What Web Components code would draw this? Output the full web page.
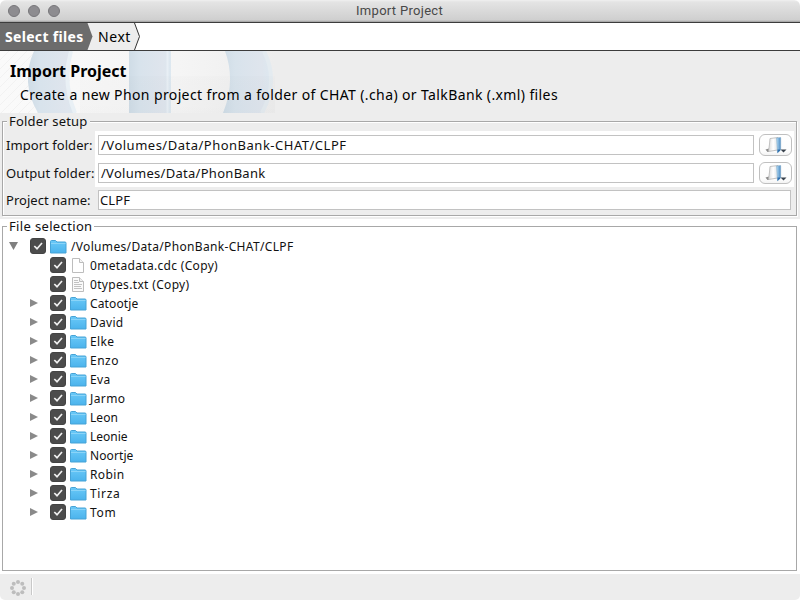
<!DOCTYPE html>
<html lang="en"><head><meta charset="utf-8"><title>Import Project</title>
<style>html,body{margin:0;width:800px;height:600px;overflow:hidden;background:#fff}</style></head><body>
<import-window></import-window>
<script>
const define=(name,html,setup)=>customElements.define(name,class extends HTMLElement{
 connectedCallback(){ if(this.shadowRoot)return; const r=this.attachShadow({mode:'open'}); const t=document.createElement('template'); t.innerHTML=html; r.append(t.content.cloneNode(true)); if(setup)setup(this,r); }
});
// Single-line label whose tracking is set so that it spans the width in "w".
define('fit-label',`<style>:host{display:block;white-space:pre;flex:none}span{display:inline-block}</style><span><slot></slot></span>`,(h,r)=>{
 const s=r.querySelector('span'),w=+h.getAttribute('w'),n=h.textContent.length;
 if(w){ const d=w-s.getBoundingClientRect().width; s.style.letterSpacing=(d/n).toFixed(3)+'px'; }
});
define('title-bar',`<style>:host{display:grid;grid-template-columns:100px 1fr 100px;align-items:center;height:22px;box-sizing:border-box;background:linear-gradient(#f0f0f0 0,#e4e4e4 2px,#cfcfcf 20px,#b8b8b8);border-bottom:1px solid #aaa;border-radius:6px 6px 0 0;color:#484848;font:13px/20px Roboto,Inter,sans-serif}
.dots{display:flex;gap:8px;padding-left:8px}.dots i{width:12px;height:12px;box-sizing:border-box;border-radius:50%;background:#8d8c90;border:1px solid #77767a}
.t{display:flex;justify-content:center;padding:1px 1px 0 0}</style><div class="dots"><i></i><i></i><i></i></div><div class="t"><fit-label w="87">Import Project</fit-label></div>`);
define('step-bar',`<style>:host{display:grid;height:29px;box-sizing:border-box;border-top:1px solid #3c3c3c;border-bottom:1px solid #3c3c3c;background:#fff}
svg{display:block}.l{display:flex;font:14px/27px "Noto Sans",sans-serif;padding-left:5px}.l b{width:93px;color:#fff;font-weight:700}.c{color:#000}svg,.l{grid-area:1/1}</style>
<svg width="150" height="27"><path d="M87 0H134.500L139.500 13.500L134.500 27H87Z" fill="#ededed"/><path d="M134.500 0L139.500 13.500L134.500 27" fill="none" stroke="#333"/><path d="M0 0H87.500L92.500 13.500L87.500 27H0Z" fill="#6c6c6c"/></svg>
<div class="l"><b><fit-label w="78.500">Select files</fit-label></b><fit-label class="c" w="33">Next</fit-label></div>`);
define('page-heading',`<style>:host{display:grid;height:62px;background:#ededed;overflow:hidden}svg,.t{grid-area:1/1}.t{padding:9px 0 0 10px;font-family:"Noto Sans",sans-serif;color:#000}.h{font-weight:700;font-size:16px;line-height:23px}.s{font-size:14px;line-height:24px;padding-left:10px}</style>
<svg width="275" height="62"><defs>
<linearGradient id="f"><stop stop-color="#fafafa"/><stop offset=".65" stop-color="#f5f5f5"/><stop offset="1" stop-color="#ededed"/></linearGradient>
<linearGradient id="b"><stop stop-color="#cfdce6"/><stop offset=".25" stop-color="#d8e3ec"/><stop offset=".8" stop-color="#dfe5ed"/><stop offset="1" stop-color="#dde8f0"/></linearGradient>
<linearGradient id="s" x2="0" y2="1"><stop stop-color="#000" stop-opacity=".01"/><stop offset="1" stop-color="#000" stop-opacity=".02"/></linearGradient>
<pattern id="p" width="9" height="9" patternUnits="userSpaceOnUse"><path d="M-1 10L10-1M-1 1L1-1M8 10L10 8" stroke="#f2f2f2" fill="none"/></pattern></defs>
<path fill="url(#f)" d="M0 0H275V62H0Z"/><path fill="url(#p)" d="M0 0H70V62H0Z"/>
<path d="M34 0H72Q63 31 76 62H38Q20 31 34 0Z" fill="url(#b)"/><path d="M71 0Q62 31 75 62" fill="none" stroke="#e9f0f5" stroke-width="4"/>
<path d="M129 0H171V62H129Z" fill="url(#b)"/><path d="M167.500 0V62" stroke="#e8eff5" stroke-width="2"/>
<path d="M225 0H264Q279 30 262 62H223Q236 30 225 0Z" fill="url(#b)"/><path d="M264 0Q279 30 262 62" fill="none" stroke="#e4ebf0" stroke-width="4"/>
<path d="M80 25H275V62H80Z" fill="url(#s)"/></svg>
<div class="t"><fit-label class="h" w="116.500">Import Project</fit-label><fit-label class="s" w="538">Create a new Phon project from a folder of CHAT (.cha) or TalkBank (.xml) files</fit-label></div>`);
define('group-box',`<style>:host{display:block;position:relative;box-sizing:border-box;border:1px solid #a8a8a8;margin:0 3px 0 2px;box-shadow:1px 1px 0 #fff,inset 1px 1px 0 #fff}
.c{position:absolute;left:4px;top:-10px;padding:0 2px;background:linear-gradient(transparent 8px,var(--bg,#fff) 8px 12px,transparent 12px);font:13px/19px "Noto Sans",sans-serif}</style><fit-label class="c"></fit-label><slot></slot>`,(h,r)=>{
 const old=r.querySelector('.c'),l=document.createElement('fit-label');l.className='c';l.setAttribute('w',h.getAttribute('w'));l.textContent=h.getAttribute('caption');old.replaceWith(l);});
define('text-box',`<style>:host{display:block;box-sizing:border-box;height:20px;border:1px solid #c2c2c2;background:#fff;padding-left:2px;font:13px/19px "Noto Sans",sans-serif;overflow:hidden}</style><slot></slot>`);
define('browse-button',`<style>:host{display:block;width:33px;height:22px;box-sizing:border-box;border:1px solid #c0c0c0;border-radius:6px;background:linear-gradient(#fff,#fdfdfd 80%,#f3f3f3)}svg{display:block}</style>
<svg width="31" height="20" viewBox="0 0 31 20"><defs><linearGradient id="a"><stop stop-color="#b5def8"/><stop offset="1" stop-color="#4a88c0"/></linearGradient><linearGradient id="w"><stop stop-color="#dcdcdc"/><stop offset=".5" stop-color="#fff"/><stop offset="1" stop-color="#dfe2e5"/></linearGradient></defs>
<path d="M5.500 14.500L9 13.500L9 17H7.500Z" fill="#8c8c8c"/><path d="M10 3.500L18 2.500L17.500 15L8.500 16.500L9.500 9Z" fill="url(#w)" stroke="#b5b5b5" stroke-width=".8"/><path d="M16.500 3L20.700 2.500V15L17.500 17.800Z" fill="url(#a)" stroke="#7fa6c4" stroke-width=".5"/><path d="M17.500 14.500H20V15.500L17.500 18Z" fill="#2f6fae"/><path d="M20.500 14.500H26.500L23.500 17.500Z" fill="#39424d"/></svg>`);
define('folder-setup',`<style>:host{display:block;padding:9px 2px 5px 3px;font:13px/19px "Noto Sans",sans-serif}.g{display:grid;grid-template-columns:89px 1fr;grid-template-rows:28px 28px 27px}.l{padding:5px 0 0 0}.f{display:flex;background:#fff;padding:4px 2px 0 3px;gap:5px}.f text-box{flex:1}.f browse-button{margin-top:-1px}.n{padding:3px 3px 0}.l.p{padding-top:4px}.n fit-label{margin-left:-1px}</style>
<div class="g"><fit-label class="l" w="86.500">Import folder:</fit-label><div class="f"><text-box><fit-label w="245.500">/Volumes/Data/PhonBank-CHAT/CLPF</fit-label></text-box><browse-button></browse-button></div>
<fit-label class="l" w="88.500">Output folder:</fit-label><div class="f"><text-box><fit-label w="164.500">/Volumes/Data/PhonBank</fit-label></text-box><browse-button></browse-button></div>
<fit-label class="l p" w="84.500">Project name:</fit-label><div class="n"><text-box><fit-label w="30">CLPF</fit-label></text-box></div></div>`);
const icons={
folder:`<path d="M.5 2.500Q.5 1.500 1.500 1.500H5.500L7 3H15Q16 3 16 4V14H.5Z" fill="url(#z)" stroke="#47a3d6"/><path d="M1 4.500H15.500" stroke="#8ad4f8"/>`,
file:`<path d="M2.500.5H9.500L13.500 4.500V14.500H2.500Z" fill="#fff" stroke="#bdbdbd"/><path d="M9.500.5V4.500H13.500" fill="#f5f5f5" stroke="#bdbdbd"/>`,
text:`<path d="M2.500.5H9.500L13.500 4.500V14.500H2.500Z" fill="#fafafa" stroke="#bdbdbd"/><path d="M9.500.5V4.500H13.500" fill="#eee" stroke="#bdbdbd"/><path d="M4 3.500H8M4 5.500H9M4 7.500H12M4 9.500H11M4 11.500H12" stroke="#c2c2c2"/>`};
define('tree-row',`<style>:host{display:flex;height:19px;align-items:center;font:12px/19px "Noto Sans",sans-serif}svg{display:block;flex:none;margin-bottom:1px}.a{margin-right:12px}.k{margin-right:4px;margin-bottom:2px}.i{margin-right:3px}fit-label{line-height:19px}:host([root]) .i{margin-right:4px}</style>
<svg class="a" width="9" height="10"></svg><svg class="k" width="16" height="16"><rect x=".5" y=".5" width="15" height="15" rx="2.500" fill="#4c4c4c" stroke="#444"/><path d="M4.300 8L7 10.700L12 5" fill="none" stroke="#f0f0f0" stroke-width="1.700"/></svg><svg class="i" width="17" height="15"></svg>`,(h,r)=>{
 const o=h.getAttribute('arrow'),A=r.querySelector('.a');h.style.paddingLeft=(h.hasAttribute('root')?6:26)+'px';
 if(o)A.innerHTML=o=='down'?'<path d="M0 1H9L4.500 9Z" fill="#808080"/>':'<path d="M1 1L9 5L1 9Z" fill="#8a8a8a"/>';
 r.querySelector('.i').innerHTML='<defs><linearGradient id="z" x2="0" y2="1"><stop stop-color="#6ac9f8"/><stop offset="1" stop-color="#4bb3ec"/></linearGradient></defs>'+icons[h.getAttribute('icon')];
 const l=document.createElement('fit-label');l.setAttribute('w',h.getAttribute('w'));l.textContent=h.getAttribute('label');r.append(l);
});
define('file-tree',`<style>:host{display:block;padding-top:10px}</style>`,(h,r)=>{
 [['/Volumes/Data/PhonBank-CHAT/CLPF',222.5,'folder','down'],['0metadata.cdc (Copy)',128,'file',''],['0types.txt (Copy)',99.5,'text',''],['Catootje',48.5],['David',33.5],['Elke',24.5],['Enzo',29],['Eva',20.5],['Jarmo',35.5],['Leon',28],['Leonie',37.5],['Noortje',43.5],['Robin',34.5],['Tirza',30.5],['Tom',26.5]].forEach(([t,w,i='folder',a='right'],n)=>{
 const e=document.createElement('tree-row');e.setAttribute('label',t);e.setAttribute('w',w);e.setAttribute('icon',i);if(a)e.setAttribute('arrow',a);if(!n)e.setAttribute('root','');r.append(e);});
});
define('status-bar',`<style>:host{display:flex;height:26px;background:#ededed;border-radius:0 0 5px 5px;padding:4px 0 0 9px;box-sizing:border-box;gap:5px}i{width:1px;height:17px;background:#c8c8c8;border-right:1px solid #fff}svg{display:block}</style><svg width="17" height="20"><g fill="#bdbdbd"></g></svg><i></i>`,(h,r)=>{
 r.querySelector('g').innerHTML=[...Array(8)].map((_,i)=>`<circle cx="${9+6*Math.cos(i*Math.PI/4)}" cy="${10+6*Math.sin(i*Math.PI/4)}" r="2"/>`).join('');});
define('import-window',`<style>:host{display:flex;flex-direction:column;width:800px;height:600px;background:#fff;color:#111;overflow:hidden}.p{background:#ededed;padding:8px 0 3px;height:106px;box-sizing:border-box;--bg:#ededed}.p group-box{height:95px}.t{padding-top:7px;height:355px;box-sizing:border-box}.t group-box{height:345px}</style>
<title-bar></title-bar><step-bar></step-bar><page-heading></page-heading>
<div class="p"><group-box caption="Folder setup" w="78.500"><folder-setup></folder-setup></group-box></div>
<div class="t"><group-box caption="File selection" w="83.500"><file-tree></file-tree></group-box></div><status-bar></status-bar>`);
</script></body></html>
